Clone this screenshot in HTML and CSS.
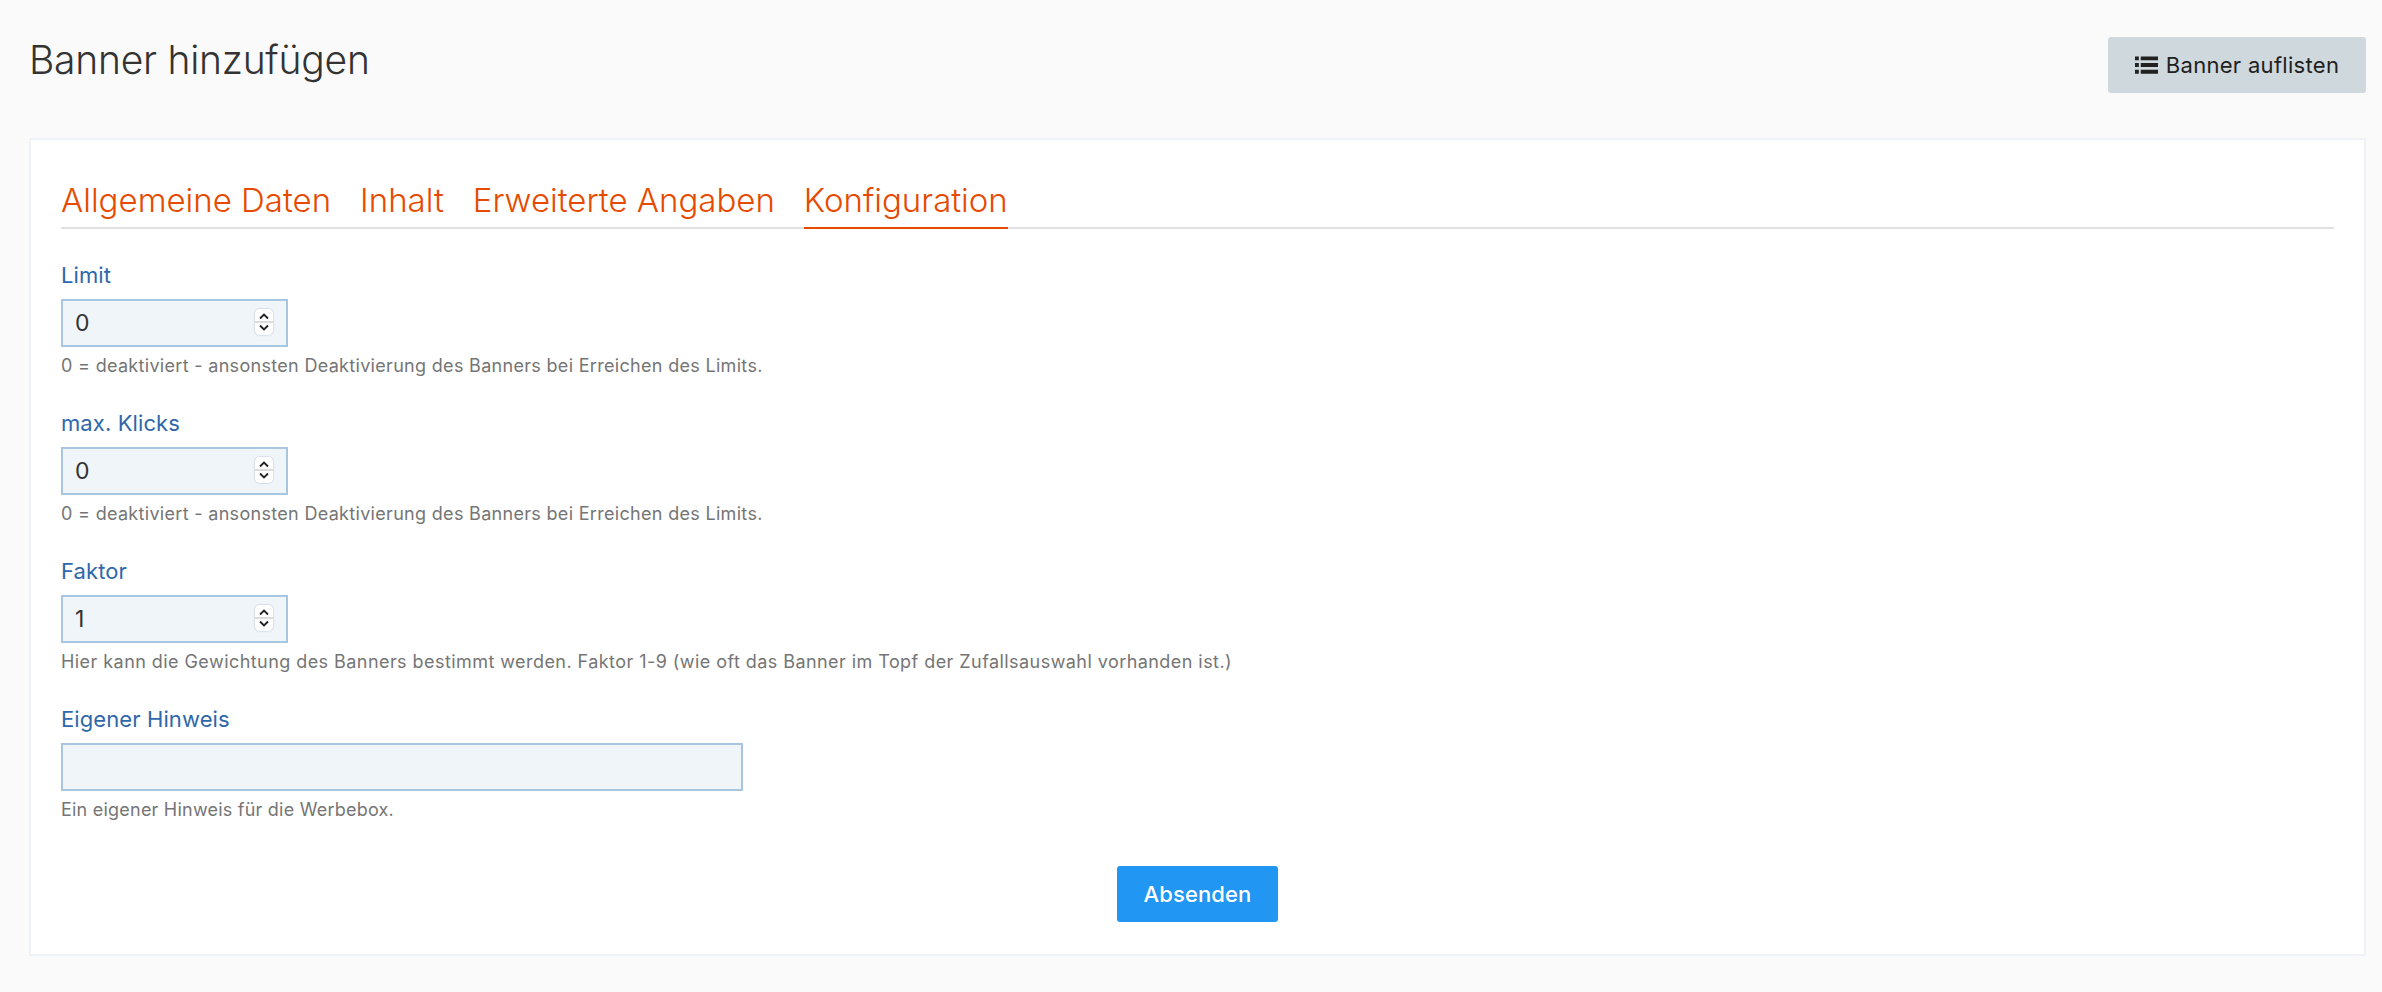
FILE: index.html
```html
<!DOCTYPE html>
<html lang="de">
<head>
<meta charset="utf-8">
<title>Banner hinzufügen</title>
<link rel="stylesheet" href="styles.css">
</head>
<body>
<main class="page">
  <header class="page-head">
    <h1 class="page-title">Banner hinzufügen</h1>
    <a class="btn btn-list" href="#">
      <svg class="list-icon" viewBox="0 0 24 20" aria-hidden="true"><path d="M0 1h4v4H0zM6 1h18v4H6zM0 8h4v4H0zM6 8h18v4H6zM0 15h4v4H0zM6 15h18v4H6z"/></svg>
      Banner auflisten
    </a>
  </header>
  <section class="card">
    <nav class="tabs">
      <a class="tab" href="#">Allgemeine Daten</a>
      <a class="tab" href="#">Inhalt</a>
      <a class="tab" href="#">Erweiterte Angaben</a>
      <a class="tab tab-active" href="#">Konfiguration</a>
    </nav>
    <form class="form">
      <div class="field">
        <label class="label">Limit</label>
        <div class="num-wrap">
          <input class="input input-num" type="text" value="0">
          <span class="spin"><svg viewBox="0 0 18 26"><path d="M5 9.5l4-4 4 4M5 16.5l4 4 4-4"/></svg></span>
        </div>
        <p class="help">0 = deaktiviert - ansonsten Deaktivierung des Banners bei Erreichen des Limits.</p>
      </div>
      <div class="field">
        <label class="label">max. Klicks</label>
        <div class="num-wrap">
          <input class="input input-num" type="text" value="0">
          <span class="spin"><svg viewBox="0 0 18 26"><path d="M5 9.5l4-4 4 4M5 16.5l4 4 4-4"/></svg></span>
        </div>
        <p class="help">0 = deaktiviert - ansonsten Deaktivierung des Banners bei Erreichen des Limits.</p>
      </div>
      <div class="field">
        <label class="label">Faktor</label>
        <div class="num-wrap">
          <input class="input input-num" type="text" value="1">
          <span class="spin"><svg viewBox="0 0 18 26"><path d="M5 9.5l4-4 4 4M5 16.5l4 4 4-4"/></svg></span>
        </div>
        <p class="help help-wide">Hier kann die Gewichtung des Banners bestimmt werden. Faktor 1-9 (wie oft das Banner im Topf der Zufallsauswahl vorhanden ist.)</p>
      </div>
      <div class="field">
        <label class="label">Eigener Hinweis</label>
        <input class="input input-text" type="text">
        <p class="help help-tight">Ein eigener Hinweis für die Werbebox.</p>
      </div>
      <div class="actions">
        <button class="btn btn-submit" type="button">Absenden</button>
      </div>
    </form>
  </section>
</main>
</body>
</html>
```

FILE: styles.css
```css
* { box-sizing: border-box; }
html, body { margin: 0; padding: 0; }
body {
  background: #fafafa;
  color: #333;
  font-family: Inter, "Liberation Sans", sans-serif;
  height: 992px;
  overflow: hidden;
}
.page { padding: 37px 16px 0 29px; }
.page-head {
  display: flex;
  justify-content: space-between;
  align-items: flex-start;
  height: 101px;
}
.page-title {
  margin: 0;
  font-size: 39px;
  line-height: 46px;
  font-weight: 300;
  color: #333;
  letter-spacing: -0.25px;
}
.btn {
  display: inline-flex;
  align-items: center;
  justify-content: center;
  height: 56px;
  border: 0;
  border-radius: 3px;
  font-family: inherit;
  font-size: 22px;
  text-decoration: none;
}
.btn-list {
  width: 258px;
  background: #cfd8dc;
  color: #212121;
  gap: 8px;
  letter-spacing: 0.3px;
}
.list-icon { width: 23px; height: 20px; fill: #212121; }
.card {
  height: 818px;
  background: #fff;
  border: 2px solid #eef2f7;
  padding: 30px 30px 0;
}
.tabs {
  display: flex;
  gap: 29px;
  height: 59px;
  border-bottom: 2px solid #e0e0e0;
}
.tab {
  height: 59px;
  font-size: 33px;
  line-height: 60px;
  font-weight: 300;
  color: #e64a00;
  text-decoration: none;
}
.tab-active { border-bottom: 2px solid #e64a00; }
.form { padding-top: 30px; }
.field { height: 148px; }
.label {
  display: block;
  font-size: 22px;
  line-height: 32px;
  letter-spacing: 0.1px;
  color: #2f67ab;
}
.num-wrap { position: relative; width: 227px; margin-top: 8px; }
.input {
  display: block;
  height: 48px;
  background: #f0f5fa;
  border: 2px solid #a9c6e0;
  border-radius: 0;
  outline: 0;
  padding: 0 12px;
  font-family: inherit;
  font-size: 23px;
  color: #333;
}
.input-num { width: 227px; }
.input-text { width: 682px; margin-top: 8px; }
.spin {
  position: absolute;
  right: 15px;
  top: 10px;
  width: 18px;
  height: 26px;
  background: linear-gradient(#fff 0, #fff 47%, #dcdcdc 47%, #dcdcdc 53%, #fff 53%);
  border-radius: 5px;
  box-shadow: 0 0 2px rgba(0,0,0,.3);
}
.spin svg { display: block; width: 18px; height: 26px; fill: none; stroke: #222; stroke-width: 1.8; }
.help {
  margin: 7px 0 0;
  font-size: 18px;
  line-height: 24px;
  letter-spacing: 0.31px;
  color: #757575;
}
.help-wide { letter-spacing: 0.44px; }
.help-tight { letter-spacing: 0.22px; }
.actions { display: flex; justify-content: center; padding-top: 15px; }
.btn-submit {
  width: 161px;
  background: #2196f3;
  color: #fff;
  font-weight: 500;
  font-size: 22px;
  letter-spacing: 0.1px;
}
```
